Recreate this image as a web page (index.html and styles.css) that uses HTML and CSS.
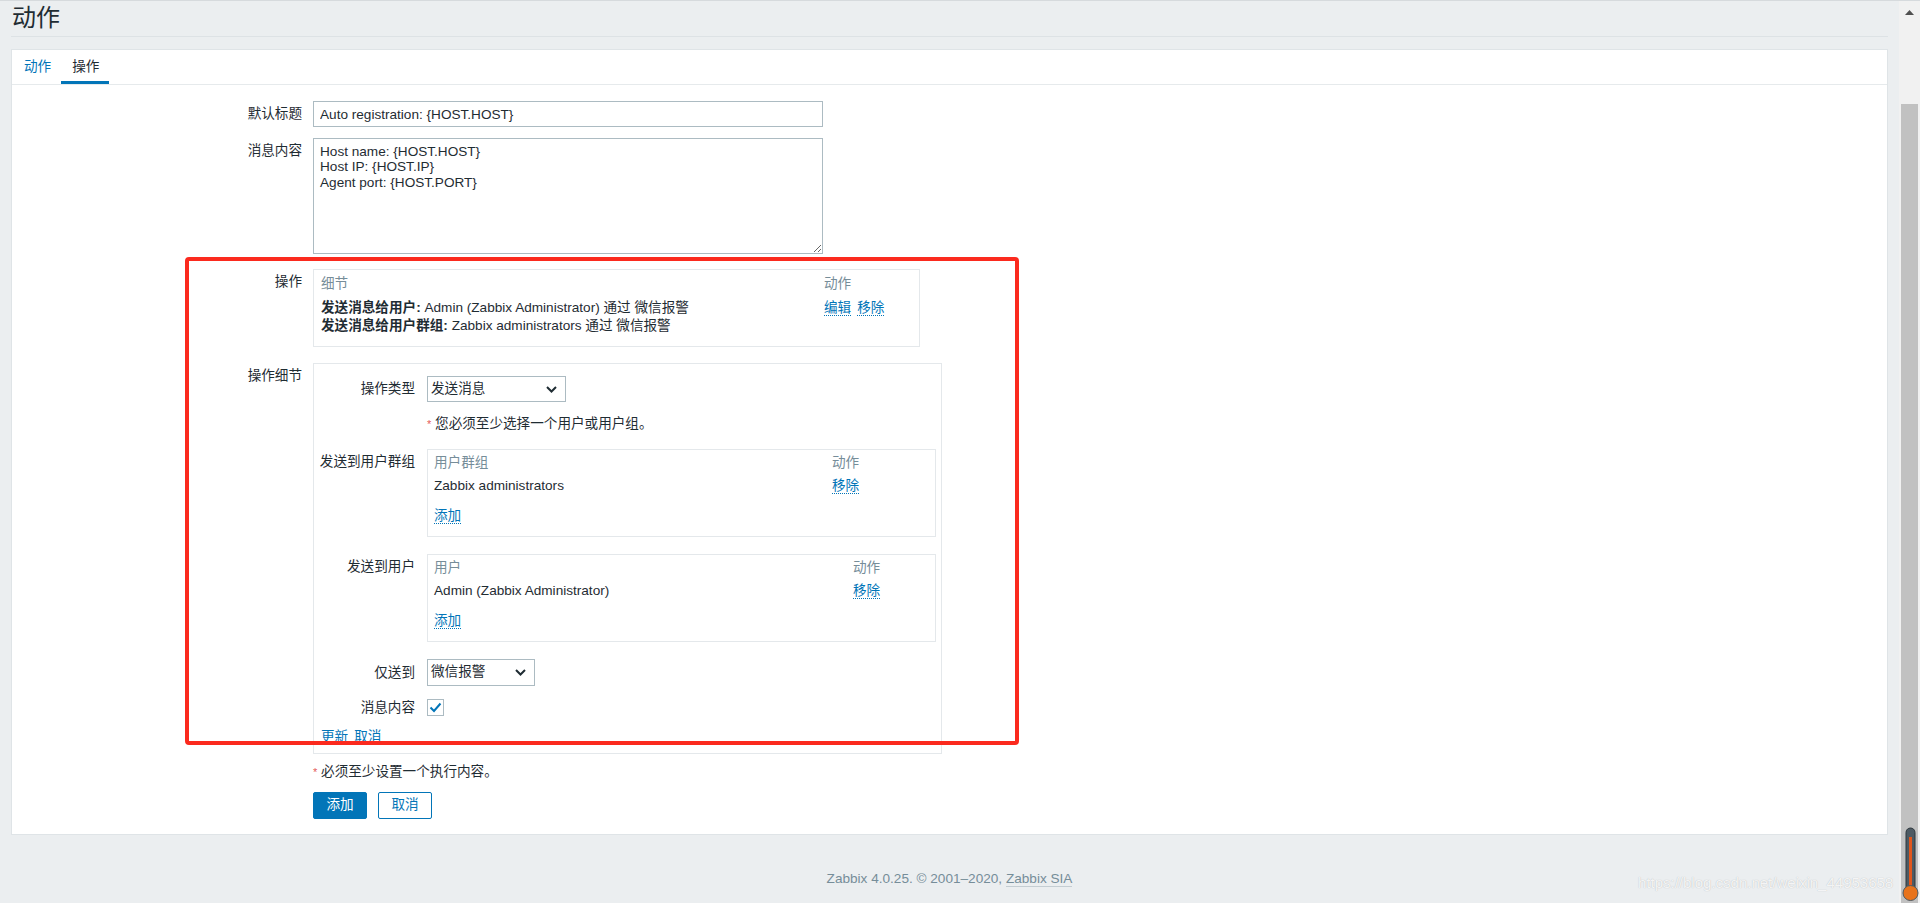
FILE: index.html
```html
<!DOCTYPE html>
<html lang="zh">
<head>
<meta charset="utf-8">
<title>动作</title>
<link rel="stylesheet" href="styles.css">
</head>
<body>
<div class="window">
  <div class="main">
    <header class="page-header"><h1>动作</h1></header>
    <div class="panel">
      <ul class="tabs">
        <li><a class="tab-link">动作</a></li>
        <li class="active">操作</li>
      </ul>
      <div class="form">
        <div class="row">
          <div class="label">默认标题</div>
          <div><input class="text" type="text" value="Auto registration: {HOST.HOST}"></div>
        </div>
        <div class="row r-msg">
          <div class="label">消息内容</div>
          <div><textarea class="area">Host name: {HOST.HOST}
Host IP: {HOST.IP}
Agent port: {HOST.PORT}</textarea></div>
        </div>
        <div class="row r-ops">
          <div class="label">操作</div>
          <div>
            <div class="ops">
              <div class="th">细节</div>
              <div class="th">动作</div>
              <div class="td"><b>发送消息给用户:</b> Admin (Zabbix Administrator) 通过 微信报警<br><b>发送消息给用户群组:</b> Zabbix administrators 通过 微信报警</div>
              <div class="td"><a class="link">编辑</a><a class="link">移除</a></div>
            </div>
          </div>
        </div>
        <div class="row r-details">
          <div class="label">操作细节</div>
          <div>
            <div class="details">
              <div class="drow">
                <div class="label">操作类型</div>
                <div><div class="select sel-wide"><span>发送消息</span><svg width="11" height="7" viewBox="0 0 11 7"><path d="M1 1 L5.5 5.5 L10 1" fill="none" stroke="#1f2c33" stroke-width="2"/></svg></div></div>
              </div>
              <div class="drow d-hint">
                <div></div>
                <div class="hint"><span class="ast">*</span> 您必须至少选择一个用户或用户组。</div>
              </div>
              <div class="drow d-groups">
                <div class="label">发送到用户群组</div>
                <div>
                  <div class="subtable groups">
                    <div class="th">用户群组</div>
                    <div class="th">动作</div>
                    <div class="td">Zabbix administrators</div>
                    <div class="td"><a class="link">移除</a></div>
                    <div class="td"><a class="link">添加</a></div>
                    <div class="td"></div>
                  </div>
                </div>
              </div>
              <div class="drow d-users">
                <div class="label">发送到用户</div>
                <div>
                  <div class="subtable users">
                    <div class="th">用户</div>
                    <div class="th">动作</div>
                    <div class="td">Admin (Zabbix Administrator)</div>
                    <div class="td"><a class="link">移除</a></div>
                    <div class="td"><a class="link">添加</a></div>
                    <div class="td"></div>
                  </div>
                </div>
              </div>
              <div class="drow d-media">
                <div class="label lh27">仅送到</div>
                <div><div class="select sel-narrow"><span>微信报警</span><svg width="11" height="7" viewBox="0 0 11 7"><path d="M1 1 L5.5 5.5 L10 1" fill="none" stroke="#1f2c33" stroke-width="2"/></svg></div></div>
              </div>
              <div class="drow d-check">
                <div class="label lh18">消息内容</div>
                <div><span class="checkbox"><svg width="13" height="11" viewBox="0 0 13 11"><path d="M1.5 5.5 L5 9 L11.5 1.5" fill="none" stroke="#0275b8" stroke-width="2"/></svg></span></div>
              </div>
              <div class="d-links"><a class="link">更新</a><a class="link">取消</a></div>
            </div>
          </div>
        </div>
        <div class="row r-req">
          <div></div>
          <div class="hint"><span class="ast">*</span> 必须至少设置一个执行内容。</div>
        </div>
        <div class="row r-buttons">
          <div></div>
          <div class="buttons"><button class="btn primary">添加</button><button class="btn alt">取消</button></div>
        </div>
      </div>
    </div>
    <footer class="footer">Zabbix 4.0.25. © 2001–2020, <a class="footer-link">Zabbix SIA</a></footer>
  </div>
  <div class="scrollbar">
    <div class="sb-top"><svg width="9" height="5" viewBox="0 0 9 5"><path d="M0 5 L4.5 0 L9 5 Z" fill="#505050"/></svg></div>
    <div class="sb-thumb"></div>
  </div>
</div>
<div class="annotation"></div>
<div class="watermark">https://blog.csdn.net/weixin_44953658</div>
<svg class="thermo" width="20" height="75" viewBox="0 0 20 75">
  <rect x="6" y="1" width="9" height="64" rx="4.5" fill="#4d5a63" stroke="#2e363c" stroke-width="1"/>
  <rect x="9" y="10" width="3" height="55" fill="#e0561c"/>
  <circle cx="10.5" cy="66" r="7.5" fill="#e8731c" stroke="#4d5a63" stroke-width="1"/>
</svg>
</body>
</html>
```

FILE: styles.css
```css
html, body {
  margin: 0;
  padding: 0;
}
body {
  background: #ebeef0;
  color: #1f2c33;
  font-family: "Liberation Sans", "Noto Sans CJK SC", sans-serif;
  font-size: 13.6px;
  line-height: 1.2;
  position: relative;
  overflow: hidden;
  height: 903px;
}
.window {
  display: flex;
  height: 903px;
  box-sizing: border-box;
  border-top: 1px solid #d6dadd;
  overflow: hidden;
}
.main {
  flex: 1;
  min-width: 0;
  padding: 0 11px;
}
.page-header {
  height: 36px;
  box-sizing: border-box;
  border-bottom: 1px solid #dde2e5;
}
.page-header h1 {
  margin: 0;
  font-size: 24px;
  font-weight: normal;
  line-height: 34px;
  padding-left: 1px;
  color: #1f2c33;
}
.panel {
  margin-top: 12px;
  background: #fff;
  border: 1px solid #dfe4e7;
  padding-bottom: 15px;
}
.tabs {
  display: flex;
  list-style: none;
  margin: 0;
  padding: 0 0 0 1px;
  height: 35px;
  box-sizing: border-box;
  border-bottom: 1px solid #e6eaec;
}
.tabs li {
  padding: 3px 10px 0 11px;
  line-height: 28px;
  height: 34px;
  box-sizing: border-box;
  border-bottom: 3px solid transparent;
}
.tabs li.active {
  border-bottom-color: #0275b8;
}
.tab-link {
  color: #0275b8;
}
.form {
  padding-top: 16px;
}
.row {
  display: grid;
  grid-template-columns: 301px 1fr;
}
.row > .label {
  text-align: right;
  padding-right: 11px;
  line-height: 26px;
}
.r-msg { margin-top: 11px; }
.r-ops { margin-top: 15px; }
.r-details { margin-top: 16px; }
.r-req { margin-top: 9px; line-height: 18px; }
.r-buttons { margin-top: 11px; }

.text {
  display: block;
  width: 510px;
  height: 26px;
  box-sizing: border-box;
  margin: 0;
  border: 1px solid #acbbc2;
  padding: 0 6px;
  font: inherit;
  color: #1f2c33;
  background: #fff;
  outline: none;
}
.area {
  display: block;
  width: 510px;
  height: 116px;
  box-sizing: border-box;
  margin: 0;
  border: 1px solid #acbbc2;
  padding: 5px 6px;
  font: inherit;
  line-height: 15.4px;
  color: #1f2c33;
  background: #fff;
  outline: none;
}
.link {
  color: #0275b8;
  border-bottom: 1px dotted #0275b8;
  margin-right: 6px;
  cursor: pointer;
}
.th {
  color: #768d99;
}
.ops {
  width: 607px;
  box-sizing: border-box;
  border: 1px solid #e4e8eb;
  padding: 5px 7px 11px;
  display: grid;
  grid-template-columns: 1fr 88px;
}
.ops .th {
  line-height: 18px;
}
.ops .td {
  padding-top: 6px;
  line-height: 18px;
}
.ops b {
  font-weight: bold;
}
.details {
  width: 629px;
  box-sizing: border-box;
  border: 1px solid #e4e8eb;
  padding: 12px 5px 7px 0;
}
.drow {
  display: grid;
  grid-template-columns: 113px 1fr;
}
.drow > .label {
  text-align: right;
  padding-right: 12px;
  line-height: 26px;
  white-space: nowrap;
}
.drow > .label.lh27 { line-height: 27px; }
.drow > .label.lh18 { line-height: 18px; }
.d-hint { margin-top: 12px; line-height: 20px; }
.d-groups { margin-top: 15px; }
.d-users { margin-top: 17px; }
.d-media { margin-top: 17px; }
.d-check { margin-top: 13px; height: 18px; }
.d-links {
  margin-top: 11px;
  padding-left: 7px;
  line-height: 18px;
}
.select {
  height: 26px;
  box-sizing: border-box;
  border: 1px solid #acbbc2;
  display: flex;
  align-items: center;
  justify-content: space-between;
  padding: 0 8px 0 3px;
  background: #fff;
}
.sel-wide { width: 139px; }
.sel-narrow { width: 108px; height: 27px; }
.hint .ast {
  color: #e45959;
  font-size: 11px;
  vertical-align: top;
}
.subtable {
  width: 509px;
  box-sizing: border-box;
  border: 1px solid #e4e8eb;
  padding: 4px 6px 5px;
  display: grid;
}
.subtable.groups { grid-template-columns: 1fr 97px; }
.subtable.users { grid-template-columns: 1fr 76px; }
.subtable .th { line-height: 17px; }
.subtable .td { line-height: 30px; }
.checkbox {
  width: 17px;
  height: 17px;
  box-sizing: border-box;
  border: 1px solid #acbbc2;
  display: flex;
  align-items: center;
  justify-content: center;
  background: #fff;
}
.buttons {
  display: flex;
  gap: 11px;
}
.btn {
  width: 54px;
  height: 27px;
  box-sizing: border-box;
  border: 1px solid #0275b8;
  border-radius: 2px;
  font: inherit;
  padding: 0;
  margin: 0;
  cursor: pointer;
}
.btn.primary {
  background: #0275b8;
  color: #fff;
}
.btn.alt {
  background: #fff;
  color: #0275b8;
}
.footer {
  margin-top: 35px;
  text-align: center;
  line-height: 18px;
  color: #768d99;
}
.footer-link {
  color: #768d99;
  border-bottom: 1px solid #c4cdd2;
}
.scrollbar {
  width: 21px;
  background: #f1f1f1;
  display: flex;
  flex-direction: column;
  align-items: center;
}
.sb-top {
  height: 103px;
  flex: none;
  display: flex;
  justify-content: center;
  padding-top: 9px;
  box-sizing: border-box;
}
.sb-thumb {
  flex: 1;
  width: 17px;
  background: #c1c1c1;
}
.annotation {
  position: absolute;
  left: 185px;
  top: 257px;
  width: 834px;
  height: 488px;
  box-sizing: border-box;
  border: 4px solid #fb2a1e;
  border-radius: 4px;
  pointer-events: none;
}
.watermark {
  position: absolute;
  left: 1638px;
  top: 874px;
  font-family: "Liberation Sans", sans-serif;
  font-size: 15px;
  line-height: 18px;
  color: rgba(255, 255, 255, 0.85);
  text-shadow: 0 0 1px rgba(0, 0, 0, 0.25);
  white-space: nowrap;
}
.thermo {
  position: absolute;
  left: 1900px;
  top: 827px;
}
```
